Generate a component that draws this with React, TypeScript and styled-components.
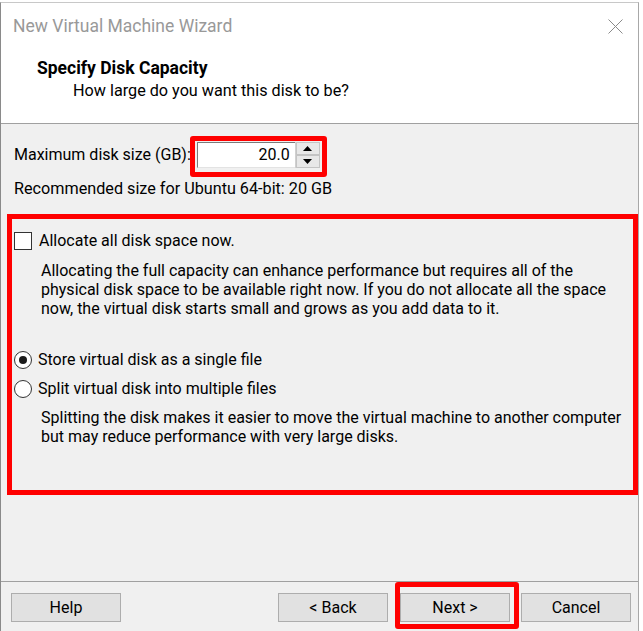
import React from "react";
import styled, { createGlobalStyle } from "styled-components";

const Global = createGlobalStyle`
  html, body { margin: 0; padding: 0; background: #ffffff; }
  body { font-family: Roboto, "Noto Sans", "Liberation Sans", sans-serif; color: #000; }
  * { box-sizing: border-box; }
`;

const Window = styled.div`
  margin-top: 2px;
  width: 639px;
  height: 629px;
  border-top: 1px solid #c8c8c8;
  border-left: 1px solid #8a8a8a;
  border-right: 1px solid #a8a8a8;
  background: #f0f0f0;
  display: flex;
  flex-direction: column;
`;

const Header = styled.div`
  height: 121px;
  background: #ffffff;
  border-bottom: 1px solid #a0a0a0;
  display: flex;
  flex-direction: column;
`;

const TitleBar = styled.div`
  height: 44px;
  display: flex;
  align-items: center;
  justify-content: space-between;
  padding: 2px 15px 0 12px;
`;

const Title = styled.div`
  font-size: 17.5px;
  color: #999999;
`;

const Heading = styled.div`
  margin-top: 10px;
  padding-left: 36px;
  font-size: 17.5px;
  font-weight: 700;
  line-height: 22px;
`;

const SubHeading = styled.div`
  margin-top: 1px;
  padding-left: 72px;
  font-size: 16.2px;
  line-height: 22px;
`;

const Body = styled.div`
  flex: 1;
  padding: 18px 0 0 13px;
  display: flex;
  flex-direction: column;
`;

const SizeRow = styled.div`
  display: flex;
  align-items: center;
  height: 26px;
`;

const Label = styled.span`
  font-size: 16px;
  line-height: 20px;
  white-space: nowrap;
`;

const Spin = styled.div`
  position: relative;
  margin-left: 6px;
  display: flex;
  height: 26px;
`;

const SpinField = styled.div`
  width: 98px;
  height: 26px;
  background: #ffffff;
  border-top: 1px solid #7a7a7a;
  border-left: 1px solid #7a7a7a;
  border-bottom: 1px solid #e3e3e3;
  font-size: 16px;
  line-height: 24px;
  text-align: right;
  padding-right: 5px;
`;

const SpinButtons = styled.div`
  display: flex;
  flex-direction: column;
  width: 25px;
  height: 26px;
  border-left: 1px solid #d0d0d0;
`;

const SpinBtn = styled.div`
  flex: 1;
  background: #e8e8e8;
  border: 1px solid #c4c4c4;
  display: flex;
  align-items: center;
  justify-content: center;
`;

const Highlight = styled.div<{ $t: number; $r: number; $b: number; $l: number }>`
  position: absolute;
  top: ${(p) => -p.$t}px;
  right: ${(p) => -p.$r}px;
  bottom: ${(p) => -p.$b}px;
  left: ${(p) => -p.$l}px;
  border: 5px solid #ff0000;
  border-radius: 3px;
  pointer-events: none;
`;

const Recommended = styled.div`
  margin-top: 11px;
  font-size: 16.2px;
  line-height: 20px;
`;

const OptionsBox = styled.div`
  margin: 15px 0 0 -7px;
  height: 281px;
  border: 5px solid #ff0000;
  padding: 12px 0 0 2px;
  display: flex;
  flex-direction: column;
`;

const OptionRow = styled.div<{ $gap: number; $top?: number }>`
  display: flex;
  align-items: center;
  height: 20px;
  gap: ${(p) => p.$gap}px;
  margin-top: ${(p) => p.$top ?? 0}px;
`;

const Checkbox = styled.div`
  width: 18px;
  height: 18px;
  background: #ffffff;
  border: 1px solid #333333;
`;

const Radio = styled.div<{ $checked?: boolean }>`
  width: 18px;
  height: 18px;
  border-radius: 50%;
  border: 1px solid #333333;
  background: #ffffff;
  display: flex;
  align-items: center;
  justify-content: center;
  &::after {
    content: "";
    display: ${(p) => (p.$checked ? "block" : "none")};
    width: 8px;
    height: 8px;
    border-radius: 50%;
    background: #1a1a1a;
  }
`;

const Desc = styled.div<{ $top: number }>`
  margin-top: ${(p) => p.$top}px;
  padding-left: 27px;
  font-size: 16px;
  line-height: 19px;
  white-space: nowrap;
`;

const Footer = styled.div`
  height: 50px;
  border-top: 1px solid #a0a0a0;
  display: flex;
  align-items: flex-start;
  padding: 11px 7px 0 10px;
`;

const Button = styled.div`
  position: relative;
  width: 110px;
  height: 29px;
  background: #e1e1e1;
  border: 1px solid #adadad;
  display: flex;
  align-items: center;
  justify-content: center;
  font-size: 16px;
`;

const Spacer = styled.div`
  flex: 1;
`;

const ButtonGap = styled.div<{ $w: number }>`
  width: ${(p) => p.$w}px;
`;

const Arrow = ({ up }: { up?: boolean }) => (
  <svg width="9" height="5" viewBox="0 0 9 5">
    <path d={up ? "M0 5 L4.5 0 L9 5 Z" : "M0 0 L4.5 5 L9 0 Z"} fill="#000" />
  </svg>
);

const CloseIcon = () => (
  <svg width="15" height="15" viewBox="0 0 15 15">
    <path d="M0.5 0.5 L14.5 14.5 M14.5 0.5 L0.5 14.5" stroke="#8a8a8a" strokeWidth="1" fill="none" />
  </svg>
);

export default function App() {
  return (
    <>
      <Global />
      <Window>
        <Header>
          <TitleBar>
            <Title>New Virtual Machine Wizard</Title>
            <CloseIcon />
          </TitleBar>
          <Heading>Specify Disk Capacity</Heading>
          <SubHeading>How large do you want this disk to be?</SubHeading>
        </Header>
        <Body>
          <SizeRow>
            <Label>Maximum disk size (GB):</Label>
            <Spin>
              <SpinField>20.0</SpinField>
              <SpinButtons>
                <SpinBtn>
                  <Arrow up />
                </SpinBtn>
                <SpinBtn>
                  <Arrow />
                </SpinBtn>
              </SpinButtons>
              <Highlight $t={6} $r={7} $b={9} $l={7} />
            </Spin>
          </SizeRow>
          <Recommended>Recommended size for Ubuntu 64-bit: 20 GB</Recommended>
          <OptionsBox>
            <OptionRow $gap={7}>
              <Checkbox />
              <Label>Allocate all disk space now.</Label>
            </OptionRow>
            <Desc $top={10}>
              Allocating the full capacity can enhance performance but requires all of the
              <br />
              physical disk space to be available right now. If you do not allocate all the space
              <br />
              now, the virtual disk starts small and grows as you add data to it.
            </Desc>
            <OptionRow $gap={6} $top={32}>
              <Radio $checked />
              <Label>Store virtual disk as a single file</Label>
            </OptionRow>
            <OptionRow $gap={6} $top={9}>
              <Radio />
              <Label>Split virtual disk into multiple files</Label>
            </OptionRow>
            <Desc $top={9}>
              Splitting the disk makes it easier to move the virtual machine to another computer
              <br />
              but may reduce performance with very large disks.
            </Desc>
          </OptionsBox>
        </Body>
        <Footer>
          <Button>Help</Button>
          <Spacer />
          <Button>&lt; Back</Button>
          <ButtonGap $w={12} />
          <Button>
            Next &gt;
            <Highlight $t={12} $r={10} $b={8} $l={6} />
          </Button>
          <ButtonGap $w={11} />
          <Button>Cancel</Button>
        </Footer>
      </Window>
    </>
  );
}
